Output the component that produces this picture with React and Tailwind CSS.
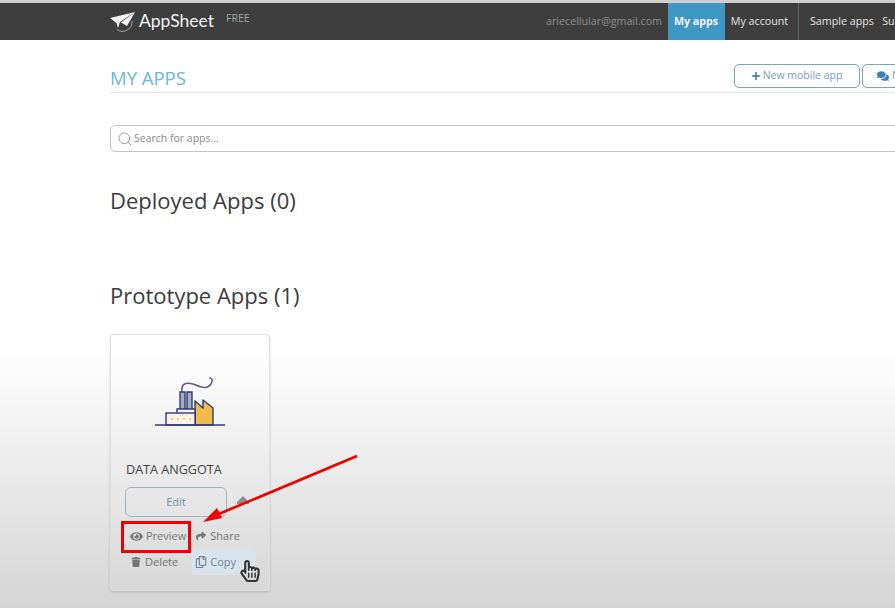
import React from "react";
import { Plus, Search } from "lucide-react";
import { FaEye, FaShare, FaTrash, FaRegCopy, FaRegHandPointer, FaComments } from "react-icons/fa";

function Logo() {
  return (
    <svg width="26" height="22" viewBox="0 0 26 22" className="shrink-0">
      <path d="M0 7 L25 1 L10 11 L8 17 L6.5 12 Z" fill="#f4f4f4" />
      <path d="M11 11.5 L25 1 L17 15 Z" fill="#f4f4f4" />
      <path d="M7 18.5 A9.5 9.5 0 0 0 22 10" fill="none" stroke="#bdbdbd" strokeWidth="0.8" />
    </svg>
  );
}

function Factory() {
  return (
    <svg width="72" height="52" viewBox="0 0 72 52">
      <path d="M27 15 C26 7 30 5 38 7 C46 10 52 13 56 7 C58 4 57 1 55 1" fill="none" stroke="#5b5f86" strokeWidth="1.6" strokeLinecap="round" />
      <path d="M40 48 V24 L48 31 V23 L58 31 V48 Z" fill="#f0bb4a" stroke="#2f3a75" strokeWidth="1.4" strokeLinejoin="round" />
      <path d="M25 33 V15 H30 V33 Z M32 33 V15 H37 V33 Z" fill="#a8adbd" stroke="#2f3a75" strokeWidth="1.4" />
      <path d="M22 36 V32 H40 V48" fill="#f6f2e8" stroke="#2f3a75" strokeWidth="1.4" />
      <rect x="11" y="36" width="29" height="12" fill="#f6f2e8" stroke="#2f3a75" strokeWidth="1.4" />
      <g fill="#eec76a">
        <circle cx="17" cy="42" r="1.1" />
        <circle cx="23" cy="42" r="1.1" />
        <circle cx="29" cy="42" r="1.1" />
        <circle cx="35" cy="42" r="1.1" />
      </g>
      <path d="M0 48 H70" stroke="#2f3a75" strokeWidth="1.6" />
    </svg>
  );
}

export default function App() {
  return (
    <div className="relative w-[895px] h-[608px] overflow-hidden font-['Open_Sans',sans-serif] bg-[linear-gradient(to_bottom,#ffffff_0px,#ffffff_350px,#d4d4d4_608px)]">
      <header className="h-[40px] bg-[#3e3e3e] border-t-[3px] border-[#cfcfcf] flex items-stretch pl-[110px] whitespace-nowrap">
        <div className="flex items-center">
          <Logo />
          <span className="ml-[3px] text-[17.5px] text-[#f2f2f2] font-['Lato',sans-serif]">AppSheet</span>
          <span className="ml-[12px] mb-[5px] text-[10.5px] text-[#a5a5a5]">FREE</span>
        </div>
        <div className="ml-auto flex items-stretch text-[10.7px] text-[#e4e4e4]">
          <span className="flex items-center pr-[6px] text-[#8f8f8f]">ariecellular@gmail.com</span>
          <span className="flex items-center justify-center w-[57px] pr-[1px] bg-[#3f97c4] font-bold text-[#f4f4f4]">My apps</span>
          <span className="flex items-center justify-center w-[74px] pr-[4px] border-r border-[#636363]">My account</span>
          <span className="flex items-center pl-[11px] w-[96px] overflow-hidden">Sample apps&nbsp;&nbsp;&nbsp;Support</span>
        </div>
      </header>

      <main className="pl-[110px]">
        <div className="h-[53px] w-[890px] border-b border-[#e6e6e6] flex items-end justify-between pb-[4px]">
          <h1 className="text-[18.5px] leading-[25px] mb-[-2px] text-[#6fb5d8]">MY APPS</h1>
          <div className="flex gap-[2px] mr-[38px]">
            <button className="w-[126px] h-[24px] rounded-[5px] border border-[#7fa3bb] bg-white text-[10.5px] text-[#7a9cb5] flex items-center justify-center gap-[1px] pr-[2px]">
              <Plus size={12} strokeWidth={3} className="text-[#3a6f9a]" />New mobile app
            </button>
            <button className="w-[100px] h-[24px] rounded-l-[5px] border border-[#7fa3bb] bg-white text-[10.5px] text-[#7a9cb5] flex items-center pl-[14px] gap-[3px]">
              <FaComments size={12} className="text-[#3a7fb5]" />New
            </button>
          </div>
        </div>

        <div className="mt-[32px] h-[27px] w-[800px] rounded-l-[5px] border border-[#c4c4c4] bg-white flex items-center pl-[6px] gap-[1px] text-[10.5px] text-[#8a8a8a]">
          <Search size={16} strokeWidth={1.5} className="text-[#9a9a9a]" />
          <span>Search for apps...</span>
        </div>

        <h2 className="mt-[32px] text-[22px] leading-[32px] text-[#3c3c3c]">Deployed Apps (0)</h2>
        <h2 className="mt-[63px] text-[22px] leading-[32px] text-[#3c3c3c]">Prototype Apps (1)</h2>

        <section className="mt-[23px] w-[160px] h-[257px] rounded-[4px] border border-[#dedede] shadow-[0_1px_3px_rgba(0,0,0,0.15)] pl-[15px] overflow-hidden">
          <div className="pt-[42px] pl-[29px]">
            <Factory />
          </div>
          <div className="mt-[33px] text-[12.6px] leading-[16px] text-[#444444] whitespace-nowrap">DATA ANGGOTA</div>
          <div className="mt-[9px] ml-[-1px] flex items-center gap-[10px]">
            <button className="w-[102px] h-[30px] rounded-[6px] border-[1.5px] border-[#9db3c2] text-[11px] text-[#6f90aa]">Edit</button>
            <svg width="12" height="8" viewBox="0 0 12 8" className="mt-[-4px]"><path d="M0 6 L6 0 L12 6 V8 H0 Z" fill="#8d8d8d" /></svg>
          </div>
          <div className="mt-[12px] flex items-center text-[11px] leading-[14px] text-[#757575]">
            <span className="flex items-center gap-[3px] ml-[4px]"><FaEye size={13} />Preview</span>
            <span className="flex items-center gap-[4px] ml-[10px]"><FaShare size={10} />Share</span>
          </div>
          <div className="mt-[6px] flex items-center text-[11px] leading-[14px] text-[#757575]">
            <span className="flex items-center gap-[4px] ml-[5px]"><FaTrash size={10} />Delete</span>
            <span className="flex items-center gap-[3px] ml-[14px] pl-[3px] pr-[19px] py-[6px] rounded-[3px] bg-[#d8e3ec] text-[#6d8498]"><FaRegCopy size={12} />Copy</span>
          </div>
        </section>
      </main>

      <div className="absolute left-[121px] top-[521px] w-[70px] h-[32px] border-[3px] border-[#f00000]" />
      <svg className="absolute left-0 top-0" width="895" height="608" viewBox="0 0 895 608">
        <path d="M357 456 L214 516" stroke="#f00000" strokeWidth="2.6" fill="none" />
        <path d="M203 522 L217 508 L222 518 Z" fill="#f00000" />
      </svg>
      <FaRegHandPointer size={22} className="absolute left-[239px] top-[560px] text-[#333333]" />
    </div>
  );
}
